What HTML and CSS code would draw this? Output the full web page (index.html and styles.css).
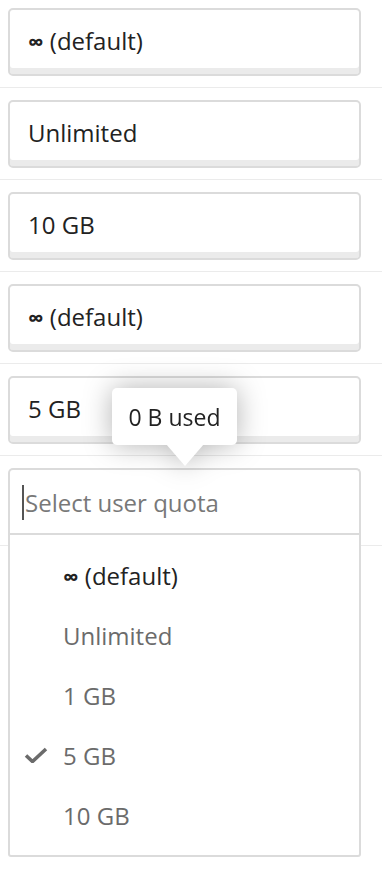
FILE: index.html
```html
<!DOCTYPE html>
<html lang="en">
<head>
  <meta charset="UTF-8">
  <title>User quota</title>
  <meta name="viewport" content="width=device-width, initial-scale=1.0">
  <link rel="stylesheet" href="styles.css">
</head>
<body>
  <div class="quota-list">
    <div class="quota-row">
      <div class="quota-box"><span><span class="inf">∞</span> (default)</span></div>
    </div>
    <div class="quota-row">
      <div class="quota-box">Unlimited</div>
    </div>
    <div class="quota-row">
      <div class="quota-box">10 GB</div>
    </div>
    <div class="quota-row">
      <div class="quota-box"><span><span class="inf">∞</span> (default)</span></div>
    </div>
    <div class="quota-row">
      <div class="quota-box">5 GB</div>
      <div class="tooltip">0 B used</div>
    </div>
    <div class="quota-row open">
      <div class="quota-select">
        <span class="caret"></span><span class="placeholder">Select user quota</span>
      </div>
      <!-- dropdown overlays the rows below -->
      <ul class="quota-options">
        <li class="active"><span class="check"></span><span><span class="inf">∞</span> (default)</span></li>
        <li><span class="check"></span>Unlimited</li>
        <li><span class="check"></span>1 GB</li>
        <li>
          <span class="check">
            <svg width="24" height="16" viewBox="0 0 24 16"><path d="M2 8.5l6.5 6L22 2" fill="none" stroke="#6b6b6b" stroke-width="3.6"/></svg>
          </span>5 GB
        </li>
        <li><span class="check"></span>10 GB</li>
      </ul>
    </div>
  </div>
</body>
</html>
```
FILE: styles.css
```css
body { margin: 0; min-height: 880px; background: #fff; font-family: "Open Sans", "Liberation Sans", sans-serif; color: #222; }
.quota-list { width: 382px; }
.quota-row { position: relative; padding: 12px 0 11px; border-bottom: 1px solid #ebebeb; }
.quota-row:first-child { padding-top: 8px; }
.quota-box {
  margin-left: 8px; width: 331px; height: 60px;
  padding: 0 0 4px 18px;
  border: 2px solid #dbdbdb; border-radius: 5px;
  box-shadow: inset 0 -6px 0 #ebebeb;
  display: flex; align-items: center;
  font-size: 24px; color: #222;
}
.inf { font-weight: bold; font-size: 22px; }

.tooltip {
  position: absolute; left: 112px; top: 24px; z-index: 2;
  width: 125px; height: 57px; box-sizing: border-box;
  background: #fff; border-radius: 5px;
  display: flex; align-items: center; justify-content: center;
  font-size: 23px; color: #222;
  filter: drop-shadow(0 0 14px rgba(0, 0, 0, 0.3));
}
.tooltip::after {
  content: ""; position: absolute; left: 54px; top: 56px;
  border-left: 19px solid transparent; border-right: 19px solid transparent;
  border-top: 22px solid #fff;
}

.open { z-index: 1; }
.quota-select {
  margin-left: 8px; width: 337px; height: 64px;
  padding-left: 12px;
  border: 2px solid #dbdbdb; border-bottom: none; border-radius: 5px 5px 0 0;
  display: flex; align-items: center; background: #fff;
}
.caret { width: 2px; height: 35px; background: #555; margin-right: 1px; }
.placeholder { font-size: 24px; color: #787878; }
.quota-options {
  position: absolute; top: 77px; left: 8px;
  list-style: none; margin: 0; padding: 10px 0;
  width: 349px; border: 2px solid #dbdbdb; border-radius: 0 0 3px 3px;
  background: #fff;
}
.quota-options li {
  height: 60px; display: flex; align-items: center;
  padding-left: 14px; font-size: 24px; color: #6b6b6b;
}
.quota-options li.active { color: #222; }
.check { width: 24px; height: 16px; margin-right: 15px; display: flex; }
```
